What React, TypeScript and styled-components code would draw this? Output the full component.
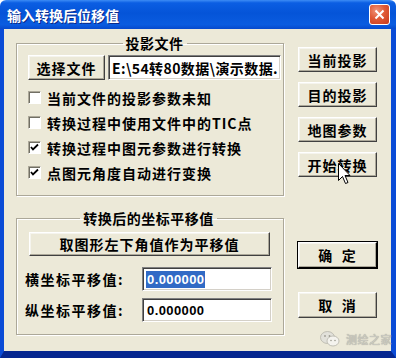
import React from "react";
import styled, { createGlobalStyle } from "styled-components";

const Global = createGlobalStyle`
  html, body { margin: 0; padding: 0; background: #ffffff; overflow: hidden; }
  #root { width: 396px; height: 358px; }
`;

const CJK = `"Noto Sans CJK SC", "Noto Sans", sans-serif`;

const Window = styled.div`
  position: relative;
  width: 396px;
  height: 358px;
  display: flex;
  flex-direction: column;
  font-family: ${CJK};
  color: #000;
`;

const TitleBar = styled.div`
  height: 29px;
  flex: none;
  display: flex;
  align-items: center;
  justify-content: space-between;
  padding: 0 6px 0 7px;
  box-sizing: border-box;
  border-radius: 6px 6px 0 0;
  background: linear-gradient(
    to bottom,
    #3d8cf5 0%,
    #0b5ee3 10%,
    #0554d8 45%,
    #0a5ce0 85%,
    #0649cc 100%
  );
`;

const Title = styled.span`
  font-size: 14px;
  font-weight: 700;
  line-height: 18px;
  color: #fff;
  text-shadow: 1px 1px 0 #0a2a8a;
`;

const CloseButton = styled.div`
  width: 21px;
  height: 21px;
  box-sizing: border-box;
  border: 1px solid #fff;
  border-radius: 3px;
  background: radial-gradient(circle at 35% 30%, #f0957a 0%, #e05a36 45%, #c8391b 100%);
  display: flex;
  align-items: center;
  justify-content: center;
`;

const Frame = styled.div`
  flex: 1;
  display: flex;
  border-style: solid;
  border-color: #0a4bd6;
  border-width: 0 5px 7px 4px;
  border-bottom-color: #05268f;
`;

const Client = styled.div`
  flex: 1;
  display: flex;
  background: #ece9d8;
  padding: 5px 0 0 12px;
`;

const LeftColumn = styled.div`
  width: 268px;
  display: flex;
  flex-direction: column;
`;

const Group = styled.fieldset<{ $top?: number }>`
  margin: ${(p) => p.$top ?? 0}px 0 0 0;
  border: 1px solid #aca899;
  box-shadow: inset 1px 1px 0 #fff, 1px 1px 0 #fff;
  display: flex;
  flex-direction: column;
  min-width: 0;
`;

const Group1 = styled(Group)`
  padding: 3px 2px 10px 11px;
`;

const Group2 = styled(Group)`
  padding: 5px 11px 12px 8px;
`;

const Legend = styled.legend`
  margin: 0 auto;
  padding: 0 3px;
  font-size: 14px;
  font-weight: 700;
  line-height: 18px;
  letter-spacing: 0.5px;
`;

const FileRow = styled.div`
  display: flex;
  gap: 3px;
  height: 25px;
`;

const Button = styled.div<{ $w?: number; $h?: number; $default?: boolean }>`
  width: ${(p) => p.$w ?? 79}px;
  height: ${(p) => p.$h ?? 25}px;
  box-sizing: border-box;
  flex: none;
  display: flex;
  align-items: center;
  justify-content: center;
  background: #ece9d8;
  font-size: 14px;
  font-weight: 700;
  letter-spacing: 1px;
  border: 1px solid;
  border-color: #ffffff #404040 #404040 #ffffff;
  box-shadow: inset -1px -1px 0 #aca899, inset 1px 1px 0 #f5f4ee;
  outline: ${(p) => (p.$default ? "1px solid #000" : "none")};
  outline-offset: 0;
  ${(p) => (p.$default ? "border-color: #fff #000 #000 #fff;" : "")}
`;

const TextBox = styled.div<{ $w?: number }>`
  ${(p) => (p.$w ? `width: ${p.$w}px; flex: none;` : "flex: 1;")}
  min-width: 0;
  box-sizing: border-box;
  background: #fff;
  border: 1px solid;
  border-color: #808080 #ffffff #ffffff #808080;
  box-shadow: inset 1px 1px 0 #404040, inset -1px -1px 0 #d4d0c8;
  display: flex;
  align-items: center;
  padding: 0 2px 0 3px;
  overflow: hidden;
  white-space: nowrap;
`;

const PathText = styled.span`
  font-size: 14px;
  font-weight: 600;
  letter-spacing: 0.4px;
`;

const NumberText = styled.span<{ $selected?: boolean }>`
  font-family: "Liberation Sans", Arial, sans-serif;
  font-size: 13px;
  font-weight: 700;
  line-height: 17px;
  letter-spacing: 0.4px;
  padding: 0 1px;
  background: ${(p) => (p.$selected ? "#316ac5" : "transparent")};
  color: ${(p) => (p.$selected ? "#fff" : "#000")};
`;

const CheckList = styled.div`
  margin-top: 5px;
  display: flex;
  flex-direction: column;
`;

const CheckRow = styled.div`
  height: 25px;
  display: flex;
  align-items: center;
  gap: 6px;
  font-size: 14px;
  font-weight: 700;
  letter-spacing: 1px;
`;

const Box = styled.div`
  width: 13px;
  height: 13px;
  box-sizing: border-box;
  background: #fff;
  border: 1px solid;
  border-color: #aca899 #fff #fff #aca899;
  box-shadow: inset 1px 1px 0 #716f64;
  display: flex;
  align-items: center;
  justify-content: center;
`;

const WideButtonRow = styled.div`
  display: flex;
  padding-left: 4px;
`;

const FieldRow = styled.div<{ $top: number }>`
  margin-top: ${(p) => p.$top}px;
  height: 24px;
  display: flex;
  align-items: center;
`;

const Label = styled.span`
  width: 118px;
  font-size: 14px;
  font-weight: 700;
  letter-spacing: 1.5px;
`;

const RightColumn = styled.div`
  margin-left: 14px;
  padding-top: 13px;
  display: flex;
  flex-direction: column;
  gap: 10px;
`;

const Spacer = styled.div<{ $h: number }>`
  height: ${(p) => p.$h}px;
`;

const Cursor = styled.svg`
  position: absolute;
  left: 338px;
  top: 163px;
`;

const Watermark = styled.div`
  position: absolute;
  left: 320px;
  top: 331px;
  display: flex;
  align-items: center;
  gap: 6px;
  font-size: 11px;
  color: #c9c8bf;
  font-weight: 500;
  letter-spacing: 0.5px;
  text-shadow: 0 0 1px #9a998f;
`;

const Check = () => (
  <svg width="9" height="9" viewBox="0 0 9 9">
    <path d="M1 4 L3 6.5 L8 1.5" stroke="#000" strokeWidth="1.8" fill="none" />
  </svg>
);

const CheckItem = ({ checked, children }: { checked?: boolean; children: React.ReactNode }) => (
  <CheckRow>
    <Box>{checked && <Check />}</Box>
    <span>{children}</span>
  </CheckRow>
);

export default function App() {
  return (
    <>
      <Global />
      <Window>
        <TitleBar>
          <Title>输入转换后位移值</Title>
          <CloseButton>
            <svg width="11" height="11" viewBox="0 0 11 11">
              <path d="M1.5 1.5 L9.5 9.5 M9.5 1.5 L1.5 9.5" stroke="#fff" strokeWidth="2" />
            </svg>
          </CloseButton>
        </TitleBar>
        <Frame>
          <Client>
            <LeftColumn>
              <Group1>
                <Legend>投影文件</Legend>
                <FileRow>
                  <Button $w={77}>选择文件</Button>
                  <TextBox>
                    <PathText>E:\54转80数据\演示数据.</PathText>
                  </TextBox>
                </FileRow>
                <CheckList>
                  <CheckItem>当前文件的投影参数未知</CheckItem>
                  <CheckItem>转换过程中使用文件中的TIC点</CheckItem>
                  <CheckItem checked>转换过程中图元参数进行转换</CheckItem>
                  <CheckItem checked>点图元角度自动进行变换</CheckItem>
                </CheckList>
              </Group1>
              <Group2 $top={13}>
                <Legend>转换后的坐标平移值</Legend>
                <WideButtonRow>
                  <Button $w={241} $h={24}>取图形左下角值作为平移值</Button>
                </WideButtonRow>
                <FieldRow $top={11}>
                  <Label>横坐标平移值:</Label>
                  <TextBox $w={130} style={{ height: 24 }}>
                    <NumberText $selected>0.000000</NumberText>
                  </TextBox>
                </FieldRow>
                <FieldRow $top={7}>
                  <Label>纵坐标平移值:</Label>
                  <TextBox $w={130} style={{ height: 24 }}>
                    <NumberText>0.000000</NumberText>
                  </TextBox>
                </FieldRow>
              </Group2>
            </LeftColumn>
            <RightColumn>
              <Button>当前投影</Button>
              <Button>目的投影</Button>
              <Button>地图参数</Button>
              <Button>开始转换</Button>
              <Spacer $h={45} />
              <Button $h={26} $default>确&nbsp;&nbsp;定</Button>
              <Spacer $h={4} />
              <Button $h={26}>取&nbsp;&nbsp;消</Button>
            </RightColumn>
          </Client>
        </Frame>
        <Cursor width="13" height="22" viewBox="0 0 13 22">
          <path
            d="M0.5 0.5 L0.5 17.5 L4.5 13.5 L7.5 20.5 L10 19.5 L7 12.5 L12 12.5 Z"
            fill="#fff"
            stroke="#000"
            strokeWidth="1"
          />
        </Cursor>
        <Watermark>
          <svg width="20" height="16" viewBox="0 0 20 16">
            <ellipse cx="7.5" cy="6.5" rx="7" ry="6" fill="#e2e1da" stroke="#b5b4aa" strokeWidth="0.8" />
            <ellipse cx="13" cy="10" rx="6" ry="5" fill="#f4f3ee" stroke="#b5b4aa" strokeWidth="0.8" />
            <circle cx="5" cy="5" r="0.9" fill="#9d9c92" />
            <circle cx="9.5" cy="5" r="0.9" fill="#9d9c92" />
            <circle cx="11" cy="9.5" r="0.8" fill="#9d9c92" />
            <circle cx="15" cy="9.5" r="0.8" fill="#9d9c92" />
          </svg>
          <span>测绘之家</span>
        </Watermark>
      </Window>
    </>
  );
}
